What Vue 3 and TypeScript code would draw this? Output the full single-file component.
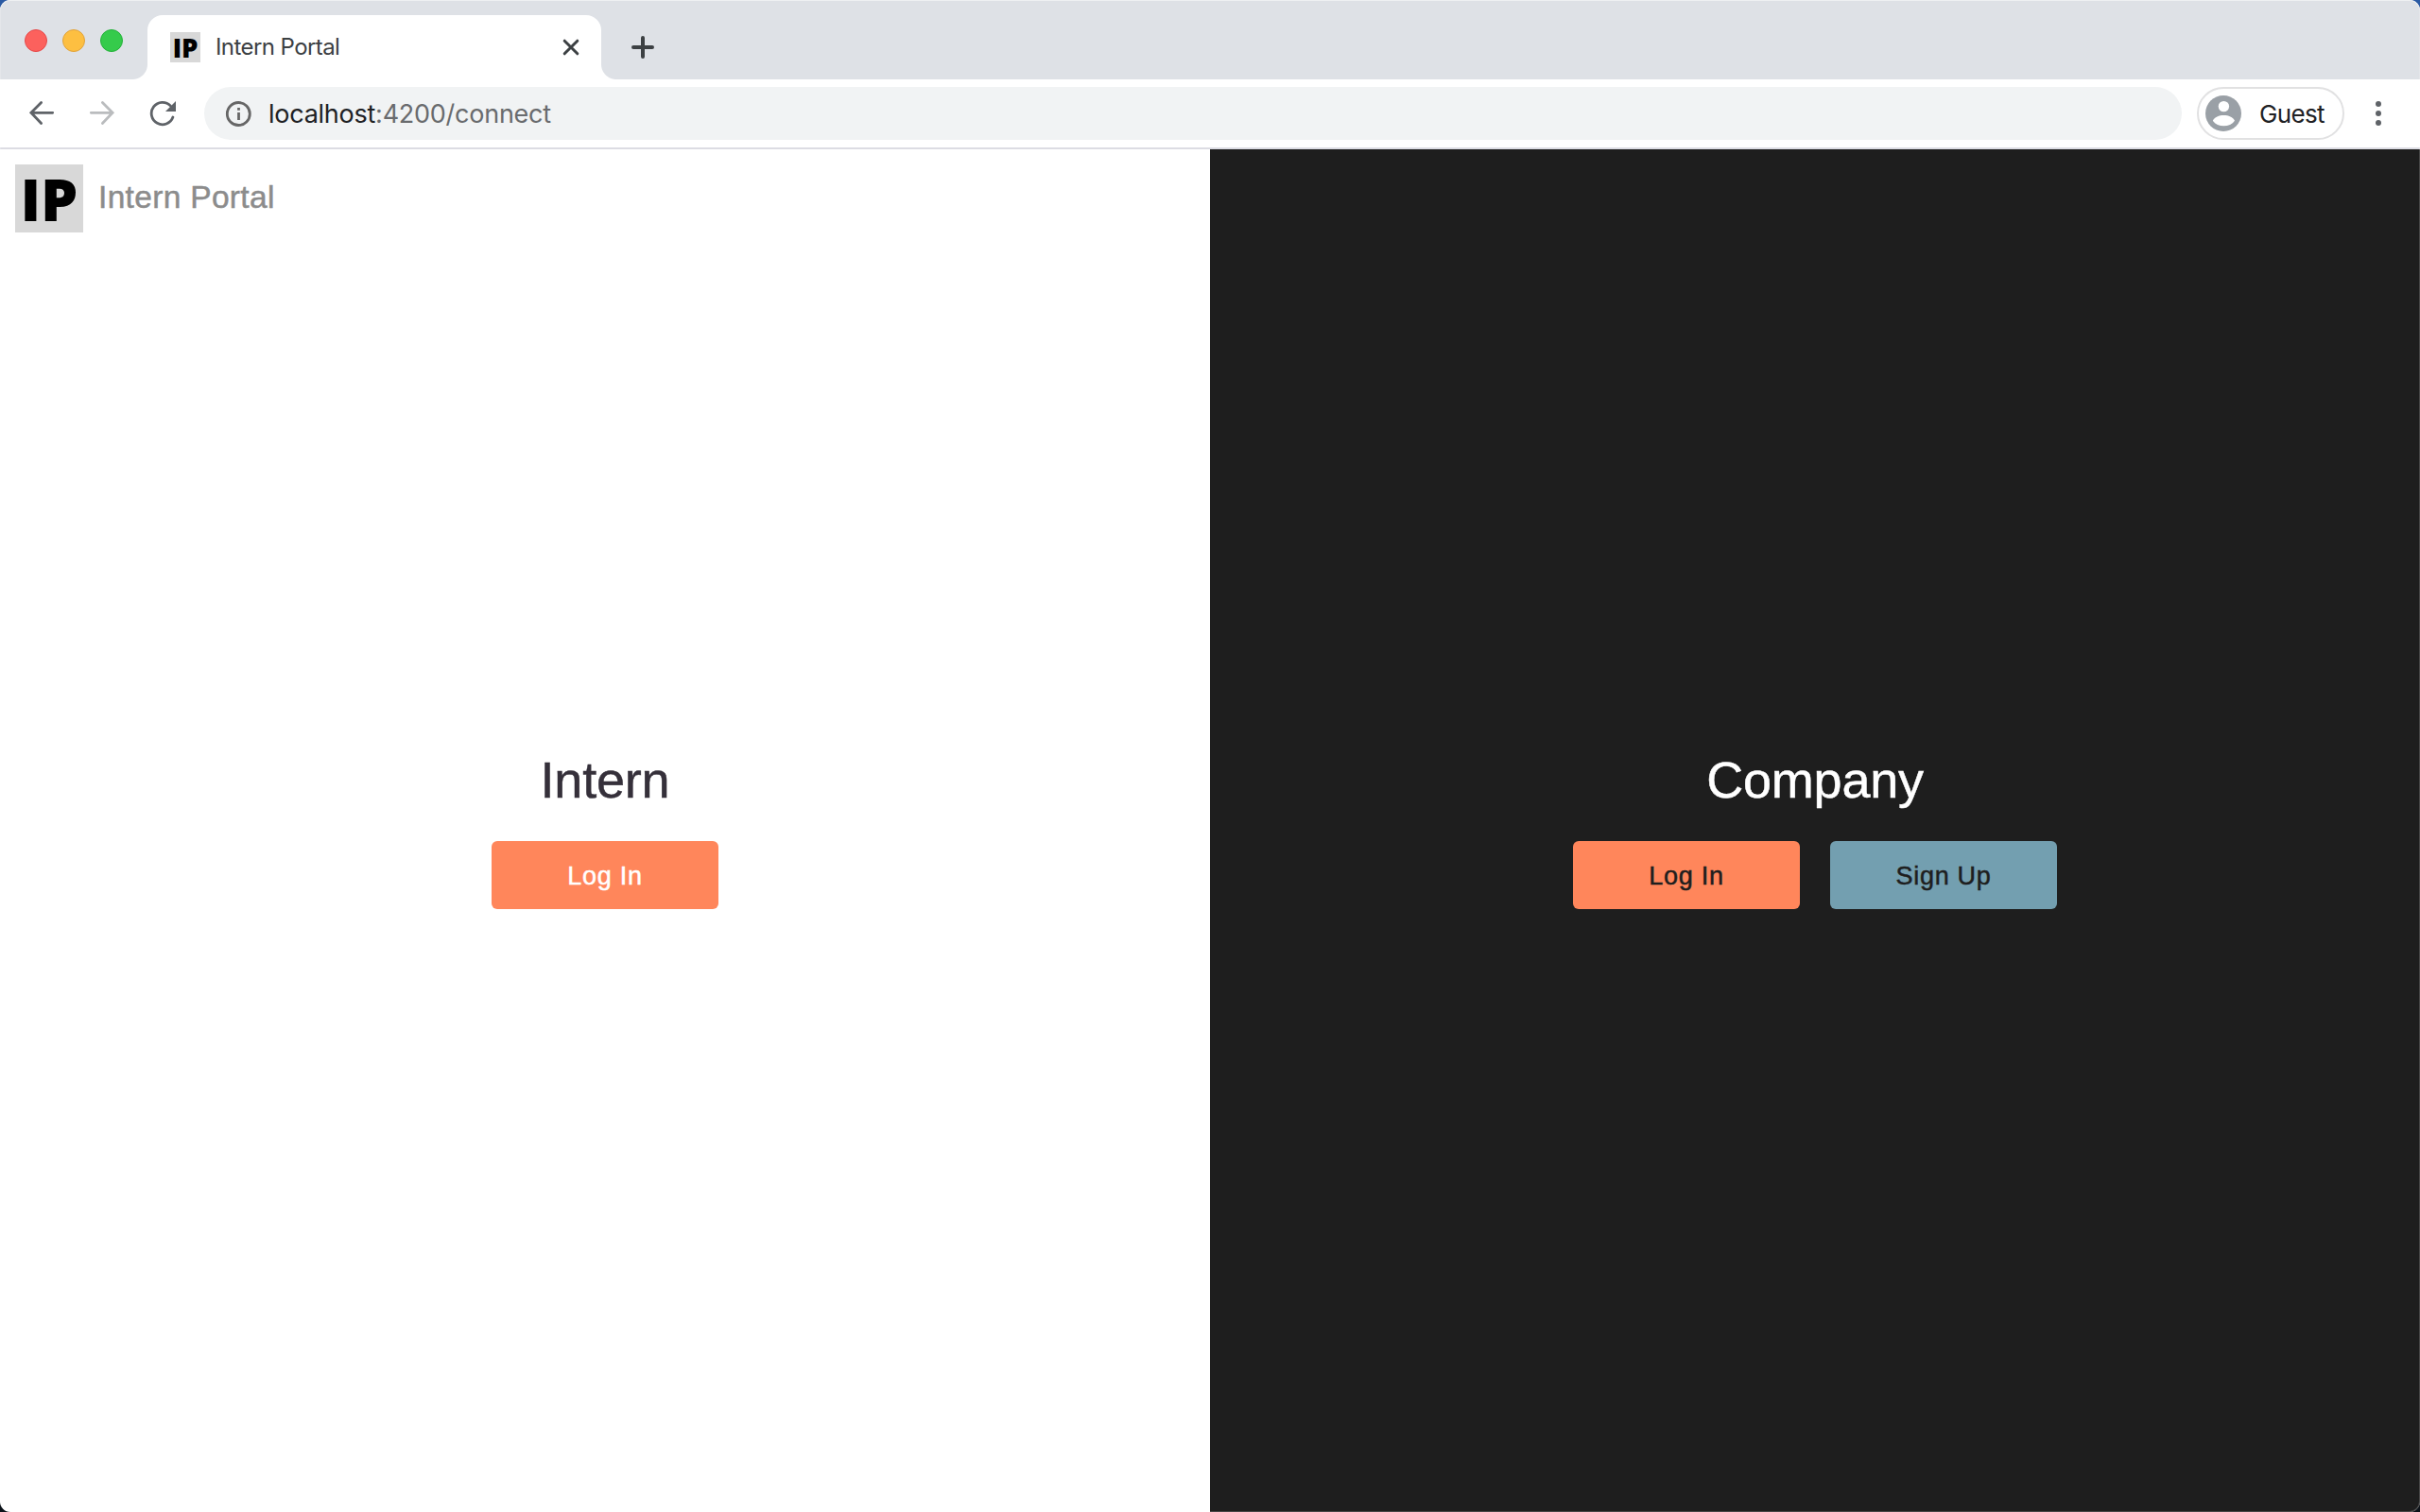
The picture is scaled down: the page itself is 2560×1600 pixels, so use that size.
<script setup lang="ts">
interface Action {
  label: string
  tone: string
}

interface Panel {
  title: string
  theme: 'light' | 'dark'
  actions: Action[]
}

const appName = 'Intern Portal'
const lamps: string[] = ['red', 'yellow', 'green']

const panels: Panel[] = [
  { title: 'Intern', theme: 'light', actions: [{ label: 'Log In', tone: 'coral' }] },
  {
    title: 'Company',
    theme: 'dark',
    actions: [
      { label: 'Log In', tone: 'coral' },
      { label: 'Sign Up', tone: 'teal' },
    ],
  },
]
</script>

<template>
  <div class="desktop">
    <div class="window">
      <header class="tabstrip">
        <div class="lamps">
          <span v-for="lamp in lamps" :key="lamp" class="lamp" :class="lamp"></span>
        </div>
        <div class="tab">
          <svg class="favicon" viewBox="0 0 72 72">
            <rect width="72" height="72" fill="#d8d8d8" />
            <text class="mark-i" x="7.600" y="59.700">I</text>
            <text class="mark-p" x="27" y="59.700">P</text>
          </svg>
          <span class="tab-title">{{ appName }}</span>
          <svg class="close" viewBox="0 0 20 20"><path d="M3.200 3.200 16.800 16.800M16.800 3.200 3.200 16.800" /></svg>
        </div>
        <svg class="plus" viewBox="0 0 24 24"><path d="M12 2v20M2 12h20" /></svg>
      </header>

      <div class="toolbar">
        <svg class="nav" viewBox="0 0 28 28"><path d="M25.700 13.300H3M13.600 2.400 2.900 13.300 13.600 24.500" /></svg>
        <svg class="nav forward" viewBox="0 0 28 28"><path d="M2.300 13.300H25M14.400 2.400 25.100 13.300 14.400 24.500" /></svg>
        <svg class="nav" viewBox="0 0 28 28">
          <path d="M22.300 5.900A11.700 11.700 0 1 0 24.900 18" />
          <path class="arrowhead" d="M28 1v11H17z" />
        </svg>
        <div class="omnibox">
          <svg class="info" viewBox="0 0 28 28">
            <circle cx="14.300" cy="14.500" r="12" />
            <path d="M14.500 13v8M14.500 8v2.700" />
          </svg>
          <span class="url"><span class="host">localhost</span>:4200/connect</span>
        </div>
        <div class="profile">
          <svg class="avatar" viewBox="0 0 38 38">
            <circle cx="19" cy="19" r="19" fill="#9aa0a6" />
            <circle cx="19.400" cy="11.600" r="5.700" fill="#fff" />
            <path d="M7.800 26.800C9.500 23 14.500 21 19.400 21S29.300 23 31 26.800C28.500 30.500 24 32.300 19.400 32.300S10.300 30.500 7.800 26.800z" fill="#fff" />
          </svg>
          <span>Guest</span>
        </div>
        <svg class="menu" viewBox="0 0 6 26">
          <circle cx="3" cy="3" r="3" />
          <circle cx="3" cy="13" r="3" />
          <circle cx="3" cy="23" r="3" />
        </svg>
      </div>

      <main class="page">
        <section v-for="panel in panels" :key="panel.title" class="panel" :class="panel.theme">
          <div v-if="panel.theme === 'light'" class="brand">
            <svg class="logo" viewBox="0 0 72 72">
              <rect width="72" height="72" fill="#d8d8d8" />
              <text class="mark-i" x="7.600" y="59.700">I</text>
              <text class="mark-p" x="27" y="59.700">P</text>
            </svg>
            <span class="brand-name">{{ appName }}</span>
          </div>
          <div class="choice">
            <h1>{{ panel.title }}</h1>
            <div class="actions">
              <button v-for="action in panel.actions" :key="action.label" :class="action.tone">{{ action.label }}</button>
            </div>
          </div>
        </section>
      </main>
    </div>
  </div>
</template>

<style>
body {
  margin: 0;
  overflow: hidden;
}
</style>

<style scoped>
* {
  box-sizing: border-box;
}

svg {
  display: block;
  flex: none;
}

.desktop {
  width: 2560px;
  height: 1600px;
  background: linear-gradient(#2b5aa3 50%, #0c1219 50%);
}

.window {
  position: relative;
  display: flex;
  flex-direction: column;
  width: 2560px;
  height: 1600px;
  overflow: hidden;
  border-radius: 11px;
  background: #fff;
  font-family: Inter, sans-serif;
}

/* thin light rim around the window */
.window::after {
  content: '';
  position: absolute;
  inset: 0;
  border-radius: 11px;
  box-shadow: inset 0 0 0 1px rgba(255, 255, 255, 0.18), inset 0 1px 0 rgba(255, 255, 255, 0.4);
  pointer-events: none;
}

.tabstrip {
  display: flex;
  align-items: flex-end;
  height: 84px;
  background: #dee1e6;
}

.lamps {
  display: flex;
  gap: 16px;
  width: 156px;
  height: 84px;
  padding: 31px 0 0 26px;
}

.lamp {
  width: 24px;
  height: 24px;
  border-radius: 50%;
}

.red {
  background: #fc615d;
  border: 1px solid #e5494a;
}

.yellow {
  background: #fdbf41;
  border: 1px solid #e0a33c;
}

.green {
  background: #35cb4b;
  border: 1px solid #24b13a;
}

.tab {
  position: relative;
  display: flex;
  align-items: center;
  width: 480px;
  height: 68px;
  padding: 0 22px 0 24px;
  border-radius: 16px 16px 0 0;
  background: #fff;
}

.tab::before,
.tab::after {
  content: '';
  position: absolute;
  bottom: 0;
  width: 16px;
  height: 16px;
}

.tab::before {
  right: 100%;
  background: radial-gradient(circle at 0 0, transparent 15.5px, #fff 16.5px);
}

.tab::after {
  left: 100%;
  background: radial-gradient(circle at 100% 0, transparent 15.5px, #fff 16.5px);
}

.favicon {
  width: 32px;
  height: 32px;
}

.logo {
  width: 72px;
  height: 72px;
}

.mark-i {
  font: 900 61px Inter, sans-serif;
}

.mark-p {
  font: 900 62.2px 'Noto Sans', sans-serif;
}

.tab-title {
  flex: 1;
  margin-left: 16px;
  font-size: 24px;
  letter-spacing: -0.58px;
  line-height: 32px;
  color: #3c4043;
}

.close {
  width: 20px;
  height: 20px;
  fill: none;
  stroke: #3c4043;
  stroke-width: 3;
  stroke-linecap: round;
}

.plus {
  width: 24px;
  height: 24px;
  margin: 0 0 22px 32px;
  fill: none;
  stroke: #3c4043;
  stroke-width: 4;
  stroke-linecap: round;
}

.toolbar {
  display: flex;
  align-items: center;
  height: 74px;
  padding: 0 41px 0 30px;
  border-bottom: 2px solid #dcdce3;
  background: #fff;
}

.nav {
  width: 28px;
  height: 28px;
  margin-right: 36px;
  fill: none;
  stroke: #5f6368;
  stroke-width: 2.8;
  stroke-linecap: round;
}

.forward {
  stroke: #babcbe;
}

.nav .arrowhead {
  fill: #5f6368;
  stroke: none;
}

.omnibox {
  display: flex;
  flex: 1;
  align-items: center;
  height: 56px;
  margin-left: -6px;
  padding-left: 22px;
  border-radius: 28px;
  background: #f1f3f4;
}

.info {
  width: 28px;
  height: 28px;
  margin-right: 18px;
  fill: none;
  stroke: #666;
  stroke-width: 2.8;
}

.url {
  font-size: 27px;
  letter-spacing: -0.25px;
  color: #696b6e;
}

.host {
  color: #202124;
}

.profile {
  display: flex;
  align-items: center;
  gap: 19px;
  width: 156px;
  height: 56px;
  margin: 0 33px 0 16px;
  padding-left: 7px;
  border: 2px solid #e1e1e2;
  border-radius: 28px;
  font-size: 26px;
  letter-spacing: -0.65px;
  color: #202124;
}

.avatar {
  width: 38px;
  height: 38px;
}

.menu {
  width: 6px;
  height: 26px;
  fill: #5f6368;
}

.page {
  display: flex;
  flex: 1;
  font-family: 'Liberation Sans', Arial, sans-serif;
  -webkit-text-stroke: 0.5px currentColor;
}

.panel {
  display: grid;
  flex: 1;
  place-items: center;
  color: #35303a;
}

.panel > * {
  grid-area: 1 / 1;
}

.dark {
  background: #1e1e1e;
  color: #fff;
}

.brand {
  display: flex;
  align-items: center;
  place-self: start;
  gap: 16px;
  padding: 16px;
}

.brand-name {
  padding-bottom: 3px;
  font-size: 33.5px;
  letter-spacing: 0.32px;
  color: #8c8c8c;
}

.logo text {
  -webkit-text-stroke: 0;
}

.choice {
  display: flex;
  flex-direction: column;
  align-items: center;
}

h1 {
  margin: 0 0 36px;
  font-size: 54px;
  font-weight: 400;
  line-height: 58px;
  letter-spacing: -0.2px;
}

.actions {
  display: flex;
  gap: 32px;
}

button {
  width: 240px;
  height: 72px;
  padding: 2px 0 0;
  border: 0;
  border-radius: 6px;
  font-family: inherit;
  font-size: 27px;
  letter-spacing: 0.7px;
  color: #1e1e1e;
}

.light button {
  color: #fff;
}

.coral {
  background: #ff865b;
}

.teal {
  background: #739fb0;
}
</style>
